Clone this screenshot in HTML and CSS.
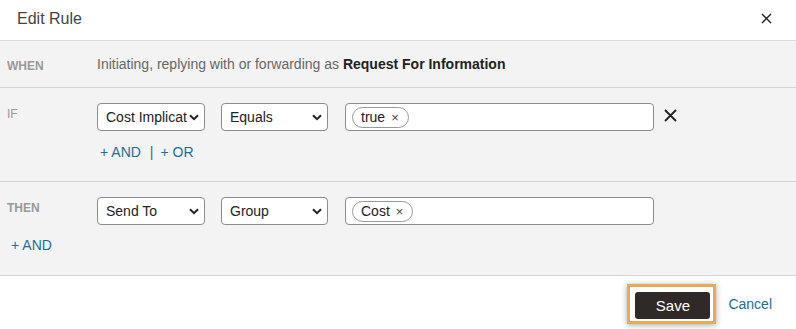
FILE: index.html
```html
<!DOCTYPE html>
<html lang="en">
<head>
    <meta charset="UTF-8">
    <title>Edit Rule</title>
    <link rel="stylesheet" href="styles.css">
</head>
<body>
    <div class="dialog">
        <div class="header">
            <h1>Edit Rule</h1>
            <span class="close">
                <svg width="11" height="11" viewBox="0 0 11 11"><path d="M1 1L10 10M10 1L1 10" stroke="#222" stroke-width="1.4"/></svg>
            </span>
        </div>

        <div class="row row-when">
            <div class="label bold">WHEN</div>
            <div class="when-text">Initiating, replying with or forwarding as <b>Request For Information</b></div>
        </div>

        <div class="row row-block">
            <div class="label">IF</div>
            <div class="content">
                <div class="fields">
                    <div class="select w-field"><span class="val">Cost Implicat</span>
                        <svg class="chev" width="10" height="7" viewBox="0 0 10 7"><path d="M1 1.2L5 5.2L9 1.2" fill="none" stroke="#222" stroke-width="2"/></svg>
                    </div>
                    <div class="select w-op"><span class="val">Equals</span>
                        <svg class="chev" width="10" height="7" viewBox="0 0 10 7"><path d="M1 1.2L5 5.2L9 1.2" fill="none" stroke="#222" stroke-width="2"/></svg>
                    </div>
                    <div class="tags">
                        <span class="tag">true <span class="tag-x">&times;</span></span>
                    </div>
                    <span class="remove">
                        <svg width="13" height="13" viewBox="0 0 13 13"><path d="M1 1L12 12M12 1L1 12" stroke="#222" stroke-width="1.8"/></svg>
                    </span>
                </div>
                <div class="links"><a href="#">+ AND</a><span class="sep">|</span><a href="#">+ OR</a></div>
            </div>
        </div>

        <div class="row row-block">
            <div class="label bold">THEN</div>
            <div class="content">
                <div class="fields">
                    <div class="select w-field"><span class="val">Send To</span>
                        <svg class="chev" width="10" height="7" viewBox="0 0 10 7"><path d="M1 1.2L5 5.2L9 1.2" fill="none" stroke="#222" stroke-width="2"/></svg>
                    </div>
                    <div class="select w-op"><span class="val">Group</span>
                        <svg class="chev" width="10" height="7" viewBox="0 0 10 7"><path d="M1 1.2L5 5.2L9 1.2" fill="none" stroke="#222" stroke-width="2"/></svg>
                    </div>
                    <div class="tags">
                        <span class="tag">Cost <span class="tag-x">&times;</span></span>
                    </div>
                </div>
            </div>
            <div class="then-add"><a href="#">+ AND</a></div>
        </div>

        <div class="footer">
            <span class="save-focus"><button class="btn-save">Save</button></span>
            <a href="#" class="cancel">Cancel</a>
        </div>
    </div>
</body>
</html>
```

FILE: styles.css
```css
body {
    margin: 0;
    font-family: "Liberation Sans", Arial, sans-serif;
    font-size: 14px;
    color: #333;
    background: #fff;
}
a {
    color: #1d6e9a;
    text-decoration: none;
}
.header {
    height: 40px;
    display: flex;
    align-items: center;
    justify-content: space-between;
    padding: 0 24px 0 17px;
    border-bottom: 1px solid #dcdcdc;
}
.header h1 {
    margin: 0;
    font-size: 16px;
    font-weight: normal;
    color: #444;
    margin-top: -3px;
}
.close {
    display: flex;
    margin-top: -4px;
}
.row {
    display: flex;
    background: #f3f3f3;
    border-bottom: 1px solid #d4d4d4;
}
.label {
    width: 90px;
    padding-left: 7px;
    font-size: 12px;
    color: #999;
}
.label.bold {
    font-weight: bold;
}
.row-when {
    height: 46px;
    align-items: center;
}
.row-when .label {
    padding-top: 3px;
}
.when-text {
    color: #666;
}
.when-text b {
    color: #222;
}
.row-block {
    height: 93px;
    position: relative;
}
.row-block .label {
    padding-top: 19px;
}
.content {
    padding-top: 15px;
}
.fields {
    display: flex;
    align-items: center;
    gap: 16px;
}
.select {
    height: 26px;
    border: 1px solid #8c8c8c;
    border-radius: 4px;
    background: #fff;
    display: flex;
    align-items: center;
    gap: 1px;
    padding: 0 5px 0 8px;
    font-size: 14px;
    color: #222;
    box-sizing: content-box;
}
.val {
    flex: 1;
    white-space: nowrap;
}
.w-field {
    width: 93px;
}
.w-op {
    width: 92px;
}
.chev {
    flex: none;
}
.tags {
    width: 301px;
    height: 26px;
    margin-left: 1px;
    border: 1px solid #8c8c8c;
    border-radius: 4px;
    background: #fff;
    display: flex;
    align-items: center;
    padding-left: 6px;
}
.tag {
    height: 19px;
    border: 1px solid #999;
    border-radius: 11px;
    padding: 0 9px 0 8px;
    display: flex;
    align-items: center;
    gap: 6px;
    color: #222;
}
.tag-x {
    font-size: 13px;
    color: #444;
}
.remove {
    display: flex;
    margin-left: -6px;
    margin-top: -4px;
}
.links {
    margin-top: 13px;
    padding-left: 3px;
}
.sep {
    color: #1d6e9a;
    margin: 0 7px 0 9px;
}
.then-add {
    position: absolute;
    left: 11px;
    top: 55px;
}
.footer {
    height: 53px;
    display: flex;
    align-items: center;
    justify-content: flex-end;
    padding-right: 24px;
    gap: 12px;
}
.save-focus {
    display: flex;
    border: 3px solid #e8aa55;
    padding: 5px 3px 2px 5px;
    box-shadow: 0 1px 6px rgba(0, 0, 0, 0.35);
    margin-top: 2px;
}
.btn-save {
    width: 75px;
    height: 27px;
    background: #2f2a28;
    color: #fff;
    border: none;
    border-radius: 3px;
    font-family: "Liberation Sans", Arial, sans-serif;
    font-size: 15px;
    cursor: pointer;
}
.cancel {
    font-size: 14px;
    margin-top: 3px;
}
```
